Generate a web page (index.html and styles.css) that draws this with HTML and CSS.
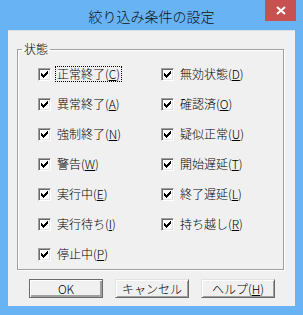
FILE: index.html
```html
<!DOCTYPE html>
<html lang="ja">
<head>
    <meta charset="UTF-8">
    <title>絞り込み条件の設定</title>
    <link rel="stylesheet" href="styles.css">
</head>
<body>
    <div class="window">
        <div class="titlebar">
            <span></span>
            <div class="title">絞り込み条件の設定</div>
            <div class="close">
                <svg width="10" height="9" viewBox="0 0 10 9"><path d="M1 1 L9 8 M9 1 L1 8" stroke="#fff" stroke-width="2"/></svg>
            </div>
        </div>

        <div class="client">
            <fieldset class="group">
                <legend>状態</legend>
                <div class="checks">
                    <label class="item"><span class="box"></span><span class="text focus">正常終了(<u>C</u>)</span></label>
                    <label class="item"><span class="box"></span><span class="text">異常終了(<u>A</u>)</span></label>
                    <label class="item"><span class="box"></span><span class="text">強制終了(<u>N</u>)</span></label>
                    <label class="item"><span class="box"></span><span class="text">警告(<u>W</u>)</span></label>
                    <label class="item"><span class="box"></span><span class="text">実行中(<u>E</u>)</span></label>
                    <label class="item"><span class="box"></span><span class="text">実行待ち(<u>I</u>)</span></label>
                    <label class="item"><span class="box"></span><span class="text">停止中(<u>P</u>)</span></label>
                    <label class="item"><span class="box"></span><span class="text">無効状態(<u>D</u>)</span></label>
                    <label class="item"><span class="box"></span><span class="text">確認済(<u>O</u>)</span></label>
                    <label class="item"><span class="box"></span><span class="text">疑似正常(<u>U</u>)</span></label>
                    <label class="item"><span class="box"></span><span class="text">開始遅延(<u>T</u>)</span></label>
                    <label class="item"><span class="box"></span><span class="text">終了遅延(<u>L</u>)</span></label>
                    <label class="item"><span class="box"></span><span class="text">持ち越し(<u>R</u>)</span></label>
                </div>
            </fieldset>

            <div class="buttons">
                <button class="btn default">OK</button>
                <button class="btn">キャンセル</button>
                <button class="btn">ヘルプ(<u>H</u>)</button>
            </div>
        </div>
    </div>
</body>
</html>
```

FILE: styles.css
```css
body {
    margin: 0;
    font-family: "Noto Sans CJK JP", "Liberation Sans", sans-serif;
    font-size: 12px;
    font-weight: 300;
    color: #000;
}
.window {
    width: 303px;
    height: 315px;
    box-sizing: border-box;
    padding: 0 8px 9px 8px;
    background: #67b3f4;
}
.titlebar {
    height: 30px;
    display: grid;
    grid-template-columns: 1fr auto 1fr;
}
.title {
    font-size: 14px;
    line-height: 30px;
    padding-top: 1px;
    white-space: nowrap;
    color: #111;
}
.close {
    justify-self: end;
    align-self: start;
    width: 31px;
    height: 21px;
    margin-right: -1px;
    background: #c75050;
    display: flex;
    align-items: center;
    justify-content: center;
}
.client {
    height: 276px;
    box-sizing: border-box;
    background: #f0f0f0;
    padding-top: 12px;
    box-shadow: inset 0 1px #d9dee4;
}
.group {
    margin: 0 11px 0 9px;
    width: 267px;
    box-sizing: border-box;
    padding: 0 0 7px 4px;
    border: 1px solid #a0a0a0;
    box-shadow: inset 1px 1px #fff, 1px 1px #fff;
}
.group legend {
    padding: 0 2px;
    line-height: 14px;
}
.checks {
    margin: 10px 0 0 16px;
    display: grid;
    grid-auto-flow: column;
    grid-template-columns: 123px 1fr;
    grid-template-rows: repeat(7, 16px);
    row-gap: 14px;
}
.item {
    display: flex;
    align-items: center;
    height: 16px;
}
.box {
    width: 13px;
    height: 13px;
    box-sizing: border-box;
    border-top: 1px solid #a0a0a0;
    border-left: 1px solid #a0a0a0;
    border-right: 1px solid #fff;
    border-bottom: 1px solid #fff;
    box-shadow: inset 1px 1px #696969, inset -1px -1px #e3e3e3;
    background: #fff url("data:image/svg+xml,%3Csvg xmlns='http://www.w3.org/2000/svg' width='11' height='11' viewBox='0 0 11 11' shape-rendering='crispEdges'%3E%3Cpath d='M2 4h1v3h-1zM3 5h1v3h-1zM4 6h1v3h-1zM5 5h1v3h-1zM6 4h1v3h-1zM7 3h1v3h-1zM8 2h1v3h-1z' fill='%23000'/%3E%3C/svg%3E") no-repeat 0 0;
    flex-shrink: 0;
}
.text {
    margin-left: 4px;
    padding: 0 1px;
    line-height: 14px;
    border: 1px solid transparent;
    white-space: nowrap;
}
.text.focus {
    border: 1px dotted #000;
}
u {
    text-underline-offset: 1px;
}
.buttons {
    display: flex;
    gap: 12px;
    margin: 9px 0 0 21px;
}
.btn {
    width: 74px;
    height: 19px;
    padding: 0;
    font-family: inherit;
    font-size: 12px;
    font-weight: 300;
    line-height: 15px;
    color: #000;
    background: #f0f0f0;
    border-top: 1px solid #e3e3e3;
    border-left: 1px solid #e3e3e3;
    border-right: 1px solid #696969;
    border-bottom: 1px solid #696969;
    box-shadow: inset 1px 1px #fff, inset -1px -1px #a0a0a0;
}
.btn.default {
    border: 1px solid #696969;
    box-shadow: inset 1px 1px #fff, inset -2px -2px #a0a0a0;
}
```
